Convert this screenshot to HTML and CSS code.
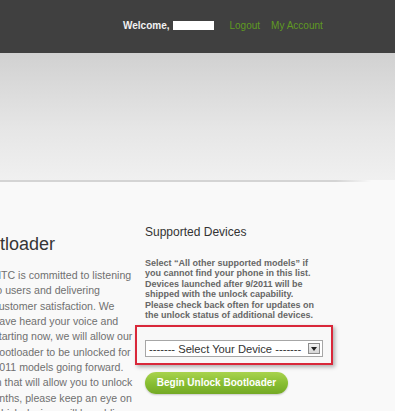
FILE: index.html
```html
<!DOCTYPE html>
<html lang="en">
<head>
  <meta charset="UTF-8">
  <meta name="viewport" content="width=device-width, initial-scale=1.0">
  <title>Unlock Bootloader</title>
  <link rel="stylesheet" href="styles.css">
</head>
<body>
  <div class="topbar">
    <span class="welcome">Welcome,</span>
    <span class="username"></span>
    <a class="toplink logout" href="#">Logout</a>
    <a class="toplink" href="#">My Account</a>
  </div>

  <div class="hero"></div>
  <div class="hero-rule"></div>

  <div class="content">
    <div class="intro">
      <h1>Unlock Bootloader</h1>
      <p>
        HTC is committed to listening<br>
        to users and delivering<br>
        customer satisfaction. We<br>
        have heard your voice and<br>
        starting now, we will allow our<br>
        bootloader to be unlocked for<br>
        2011 models going forward.<br>
        in that will allow you to unlock<br>
        onths, please keep an eye on<br>
        which devices will be adding
      </p>
    </div>

    <div class="devices">
      <h2>Supported Devices</h2>
      <p class="note">
        Select “All other supported models” if<br>
        you cannot find your phone in this list.<br>
        Devices launched after 9/2011 will be<br>
        shipped with the unlock capability.<br>
        Please check back often for updates on<br>
        the unlock status of additional devices.
      </p>

      <div class="picker">
        <div class="select">
          <span class="select-label">------- Select Your Device -------</span>
          <span class="select-arrow">
            <svg width="6" height="4" viewBox="0 0 6 4"><path d="M0 0h6L3 4z" fill="#222"/></svg>
          </span>
        </div>
      </div>

      <a class="btn-unlock" href="#">Begin Unlock Bootloader</a>
    </div>
  </div>
</body>
</html>
```

FILE: styles.css
```css
body {
  margin: 0;
  width: 395px;
  height: 411px;
  overflow: hidden;
  font-family: "Liberation Sans", Arial, sans-serif;
  background-color: #f9f9f9;
}
.topbar {
  height: 53px;
  background-color: #404040;
  display: flex;
  align-items: center;
  padding-left: 123px;
  font-size: 10px;
  box-sizing: border-box;
  padding-bottom: 3px;
}
.welcome {
  color: #f2f2f2;
  font-weight: bold;
}
.username {
  display: inline-block;
  width: 41px;
  height: 9px;
  margin-left: 3px;
  background-color: #fff;
}
.toplink {
  color: #5f9a22;
  text-decoration: none;
  margin-left: 11px;
}
.logout {
  margin-left: 16px;
}
.hero {
  height: 127px;
  background: linear-gradient(#d1d1d1, #e6e6e6 60%, #f0f0f0);
}
.hero-rule {
  height: 2px;
  background: linear-gradient(to right, #d4d4d4 85%, rgba(212,212,212,0) 94%);
}
.content {
  display: flex;
  gap: 10px;
}
.intro {
  margin-left: -6.6px;
  width: 141.6px;
  flex-shrink: 0;
  white-space: nowrap;
}
.intro h1 {
  margin: 51px 0 0 -85.5px;
  font-size: 18px;
  line-height: 22px;
  font-weight: normal;
  color: #363636;
}
.intro p {
  margin: 13px 0 0;
  font-size: 10.6px;
  line-height: 15.33px;
  color: #707070;
}
.devices {
  width: 190px;
  flex-shrink: 0;
}
.devices h2 {
  margin: 43px 0 0;
  font-size: 12px;
  line-height: 14px;
  font-weight: normal;
  color: #333;
}
.note {
  margin: 19px 0 0;
  font-size: 9px;
  line-height: 10.4px;
  font-weight: bold;
  color: #666;
  white-space: nowrap;
}
.picker {
  position: relative;
  margin: 5px 0 0 -10px;
  width: 198px;
  height: 40px;
  box-sizing: border-box;
  border: 2px solid #d9283a;
  background-color: #f8f8f8;
  box-shadow: 2px 2px 4px rgba(0,0,0,0.3);
  padding: 13px 0 0 8px;
}
.select {
  width: 178px;
  height: 17px;
  box-sizing: border-box;
  border: 1px solid #a6a6a6;
  background-color: #fff;
  display: flex;
  align-items: center;
  justify-content: space-between;
  padding: 0 2px 0 3px;
}
.select-label {
  font-size: 11.2px;
  color: #333;
  white-space: nowrap;
}
.select-arrow {
  width: 12px;
  height: 11px;
  box-sizing: border-box;
  border: 1px solid #8c8c8c;
  background: linear-gradient(#f2f2f2, #d6d6d6);
  display: flex;
  align-items: center;
  justify-content: center;
}
.btn-unlock {
  display: block;
  margin-top: 7px;
  width: 143px;
  height: 22px;
  line-height: 22px;
  border-radius: 11px;
  background: linear-gradient(#a9d34e, #86bd31 55%, #74a925);
  box-shadow: 0 1px 2px rgba(0,0,0,0.2);
  color: #fff;
  font-size: 10px;
  font-weight: bold;
  text-align: center;
  text-decoration: none;
}
```
